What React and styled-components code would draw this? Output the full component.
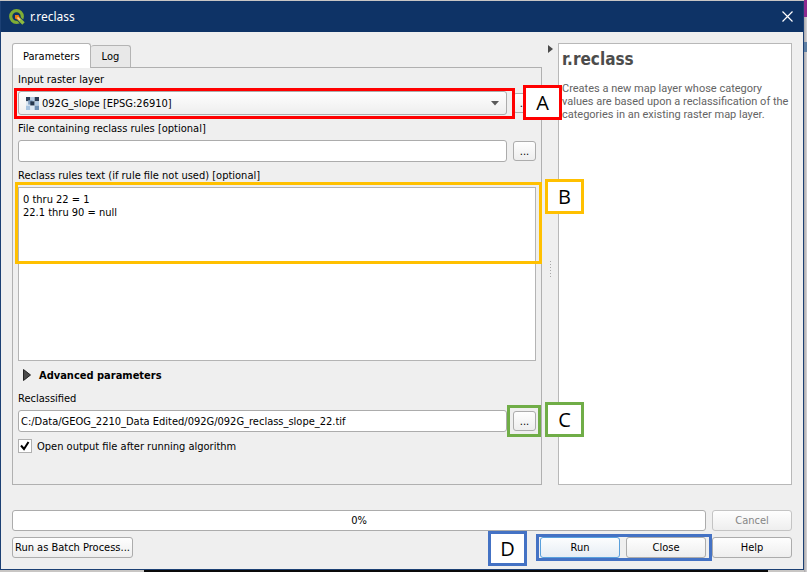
import React, { useState } from 'react';
import styled, { createGlobalStyle, css } from 'styled-components';

const GlobalStyle = createGlobalStyle`
  * {
    box-sizing: border-box;
  }

  body {
    margin: 0;
    background: #d8d8d8;
    color: #000;
    font: 11px/13px 'DejaVu Sans Condensed', sans-serif;
  }

  button, input, select, textarea {
    font: inherit;
    color: inherit;
    margin: 0;
  }
`;

const Desktop = styled.div`
  display: flex;
  min-height: 100vh;
  padding: 1px 3px 2px 0;
  background:
    linear-gradient(#8e2a8e, #8e2a8e) right 0 / 3px 17px no-repeat,
    linear-gradient(#5d7fa3, #5d7fa3) right 42px / 3px 10px no-repeat,
    linear-gradient(90deg, transparent 144px, #0a0a0a 144px, #0a0a0a calc(100% - 39px), transparent 0) bottom / 100% 2px no-repeat,
    linear-gradient(90deg, #a8a6a8, #d8d6d8) right / 3px 100% no-repeat,
    #c8c6c4;
`;

const Dialog = styled.main`
  flex: 1;
  display: flex;
  flex-direction: column;
  min-width: 0;
  border: 1px solid #1c4074;
  border-top: 0;
  background: #efefef;
`;

const TitleBar = styled.header`
  display: flex;
  align-items: center;
  gap: 5px;
  height: 31px;
  padding: 0 8px;
  background: #0e3366;
  color: #fff;
`;

const Title = styled.h1`
  flex: 1;
  margin: 0;
  font: 12px/16px 'Noto Sans', sans-serif;
`;

const CloseIcon = styled.button`
  display: flex;
  padding: 2px;
  border: 0;
  background: none;
`;

const Body = styled.div`
  flex: 1;
  display: grid;
  grid-template-columns: minmax(0, 530fr) 16px minmax(0, 234fr);
  padding: 11px 11px 0;
`;

const Left = styled.section`
  display: flex;
  flex-direction: column;
`;

const Tabs = styled.div`
  display: flex;
  align-items: flex-end;
  height: 24px;
`;

const Tab = styled.button`
  position: relative;
  z-index: 1;
  height: ${({ $active }) => ($active ? 25 : 22)}px;
  margin-bottom: ${({ $active }) => ($active ? -1 : 0)}px;
  padding: 0 ${({ $active }) => ($active ? 10 : 11)}px;
  border: 1px solid #b4b4b4;
  border-bottom: 0;
  border-left-width: ${({ $active }) => ($active ? 1 : 0)}px;
  border-radius: 3px 3px 0 0;
  background: ${({ $active }) => ($active ? '#fff' : '#e8e8e8')};
`;

const Panel = styled.form`
  flex: 1;
  display: flex;
  flex-direction: column;
  padding: 5px;
  border: 1px solid #b0b0b0;
`;

const Label = styled.label`
  display: block;
  line-height: 14px;
  margin-bottom: 4px;
`;

const FieldRow = styled.div`
  position: relative;
  display: flex;
  align-items: center;
  gap: 6px;
  margin-bottom: 7px;
`;

const frame = css`
  border: 1px solid #acacac;
  border-radius: 3px;
`;

const LayerPicker = styled.div`
  position: relative;
  flex: 1;
  display: flex;
  align-items: center;
`;

const PickerIcon = styled.span`
  position: absolute;
  ${({ $side }) => $side}: 8px;
  display: flex;
  pointer-events: none;
`;

const LayerSelect = styled.select`
  ${frame}
  appearance: none;
  width: 100%;
  height: 24px;
  padding: 0 23px;
  background: linear-gradient(#fefefe, #eee);
`;

const TextInput = styled.input`
  ${frame}
  flex: 1;
  min-width: 0;
  height: 22px;
  padding: 0 2px;
  background: #fff;
`;

const RulesText = styled.textarea`
  display: block;
  width: 100%;
  height: 174px;
  padding: 5px 4px;
  border: 1px solid #b4b4b4;
  background: #fff;
  resize: none;
`;

const Button = styled.button`
  ${frame}
  height: 21px;
  padding: 0 2px;
  background: linear-gradient(#fefefe, #eee);

  &:disabled {
    color: #858585;
    border-color: #c4c4c4;
  }
`;

const BrowseButton = styled(Button)`
  width: 23px;
  height: 20px;
`;

const DialogButton = styled(Button)`
  width: 80px;
  ${({ $primary }) =>
    $primary &&
    css`
      border-color: #5aa0dc;
      background: linear-gradient(#fcfdfe, #e6edf4);
    `}
`;

const Advanced = styled.button`
  display: flex;
  align-items: center;
  gap: 8px;
  height: 14px;
  margin-bottom: 10px;
  padding: 0 5px;
  border: 0;
  background: none;
  font-weight: bold;
`;

const CheckRow = styled.label`
  display: flex;
  align-items: center;
  gap: 5px;
  height: 14px;
`;

const Checkbox = styled.input`
  appearance: none;
  width: 14px;
  height: 14px;
  border: 1px solid #b0b0b0;
  background: #fff;
`;

const CheckMark = styled.span`
  position: relative;
  display: flex;

  svg {
    position: absolute;
    top: 2px;
    left: 2px;
    pointer-events: none;
  }
`;

const Splitter = styled.div`
  display: flex;
  flex-direction: column;
  align-items: center;
  justify-content: space-between;
  padding-top: 2px;
`;

const Grip = styled.div`
  width: 1px;
  height: 16px;
  background: repeating-linear-gradient(#a8a8a8 0 1px, transparent 1px 3px);
`;

const Help = styled.aside`
  padding: 5px 0 5px 3px;
  border: 1px solid #b8b8b8;
  background: #fff;
  color: #646464;
`;

const HelpTitle = styled.h2`
  margin: 0 0 13px;
  color: #4c4c4c;
  font: bold 17px/20px 'DejaVu Sans Condensed', sans-serif;
`;

const HelpText = styled.p`
  margin: 0;
  font-family: Roboto, sans-serif;
`;

const Footer = styled.footer`
  display: grid;
  gap: 6px;
  padding: 25px 11px 11px;
`;

const FooterRow = styled.div`
  display: flex;
  gap: 6px;
`;

const Progress = styled.div`
  ${frame}
  flex: 1;
  height: 21px;
  background: #fff;
  line-height: 19px;
  text-align: center;
`;

const ButtonPair = styled.div`
  position: relative;
  display: flex;
  gap: 6px;
  margin-left: auto;
`;

const Highlight = styled.div`
  position: absolute;
  inset: ${({ $inset }) => $inset};
  z-index: 2;
  border: 3px solid ${({ $color }) => $color};
  pointer-events: none;
`;

const Tag = styled.span`
  position: absolute;
  ${({ $side }) => ($side === 'left' ? 'right' : 'left')}: calc(100% + ${({ $gap }) => $gap}px);
  top: -6px;
  z-index: 2;
  width: 39px;
  height: 35px;
  border: 3px solid ${({ $color }) => $color};
  background: #fff;
  font: 20px/29px 'Open Sans', sans-serif;
  text-align: center;
`;

const Anchor = styled.div`
  position: relative;
  display: flex;
`;

const red = '#ff0000';
const yellow = '#ffc000';
const green = '#70ad47';
const blue = '#4472c4';

const Mark = ({ color, inset, letter, side = 'right', gap = 6 }) => (
  <Highlight $color={color} $inset={inset}>
    <Tag $color={color} $side={side} $gap={gap}>{letter}</Tag>
  </Highlight>
);

const QgisLogo = () => (
  <svg width="16" height="16" viewBox="0 0 16 16">
    <circle cx="7.5" cy="7.5" r="5.8" fill="none" stroke="#7fae35" strokeWidth="3.2" />
    <path d="M8 8 L16 16" stroke="#0e3366" strokeWidth="5" />
    <path d="M9.5 9.5 L14.5 14.5" stroke="#8dba3f" strokeWidth="3.4" />
    <path d="M6 6 H9.5 L11.5 10 L10 11.5 L6 9.5Z" fill="#ee7913" />
    <path d="M8.5 8.5 L11 11" stroke="#f4d9a0" strokeWidth="1.6" />
  </svg>
);

const cells = [
  [0, 0, '#2b3d55'], [4, 0, '#b4cce4'], [8, 0, '#2b3d55'],
  [0, 4, '#dce8f4'], [2, 3, '#7f9cbc'], [4, 4, '#24364c'], [8, 4, '#b4cce4'],
  [0, 8, '#a8c4e0'], [4, 8, '#dce8f4'], [8, 8, '#6f90b4'],
];

const RasterIcon = () => (
  <svg width="13" height="13" viewBox="0 0 12 12">
    {cells.map(([x, y, fill], i) => (
      <rect key={i} x={x} y={y} width="4" height="4" fill={fill} />
    ))}
  </svg>
);

function App() {
  const [rules, setRules] = useState('0 thru 22 = 1\n22.1 thru 90 = null');
  const [file, setFile] = useState('');
  const [output, setOutput] = useState('C:/Data/GEOG_2210_Data Edited/092G/092G_reclass_slope_22.tif');
  const [open, setOpen] = useState(true);

  return (
    <>
      <GlobalStyle />
      <Desktop>
        <Dialog>
          <TitleBar>
            <QgisLogo />
            <Title>r.reclass</Title>
            <CloseIcon aria-label="Close window">
              <svg width="11" height="11" viewBox="0 0 11 11">
                <path d="M0.5 0.5 L10.5 10.5 M10.5 0.5 L0.5 10.5" stroke="#fff" strokeWidth="1.2" />
              </svg>
            </CloseIcon>
          </TitleBar>

          <Body>
            <Left>
              <Tabs role="tablist">
                <Tab role="tab" aria-selected="true" $active>Parameters</Tab>
                <Tab role="tab" aria-selected="false">Log</Tab>
              </Tabs>
              <Panel onSubmit={(e) => e.preventDefault()}>
                <Label htmlFor="layer">Input raster layer</Label>
                <FieldRow>
                  <LayerPicker>
                    <LayerSelect id="layer">
                      <option>092G_slope [EPSG:26910]</option>
                    </LayerSelect>
                    <PickerIcon $side="left">
                      <RasterIcon />
                    </PickerIcon>
                    <PickerIcon $side="right">
                      <svg width="8" height="5" viewBox="0 0 8 5">
                        <path d="M0 0 H8 L4 4.5Z" fill="#5a5a5a" />
                      </svg>
                    </PickerIcon>
                    <Mark color={red} inset="-3px -8px -4px -4px" letter="A" gap={11} />
                  </LayerPicker>
                  <BrowseButton type="button" aria-label="Browse layer">...</BrowseButton>
                </FieldRow>

                <Label htmlFor="file">File containing reclass rules [optional]</Label>
                <FieldRow>
                  <TextInput id="file" value={file} onChange={(e) => setFile(e.target.value)} />
                  <BrowseButton type="button" aria-label="Browse rules file">...</BrowseButton>
                </FieldRow>

                <Label htmlFor="rules">Reclass rules text (if rule file not used) [optional]</Label>
                <FieldRow>
                  <RulesText id="rules" value={rules} onChange={(e) => setRules(e.target.value)} />
                  <Mark color={yellow} inset="-5px -6px 97px -3px" letter="B" />
                </FieldRow>

                <Advanced type="button">
                  <svg width="8" height="12" viewBox="0 0 8 12">
                    <path d="M0.5 0.5 L7.5 6 L0.5 11.5Z" fill="#4a4a4a" stroke="#222" />
                  </svg>
                  Advanced parameters
                </Advanced>

                <Label htmlFor="output">Reclassified</Label>
                <FieldRow>
                  <TextInput id="output" value={output} onChange={(e) => setOutput(e.target.value)} />
                  <Anchor>
                    <BrowseButton type="button" aria-label="Browse output">...</BrowseButton>
                    <Mark color={green} inset="-6px -5px -6px -6px" letter="C" gap={7} />
                  </Anchor>
                </FieldRow>

                <CheckRow>
                  <CheckMark>
                    <Checkbox type="checkbox" checked={open} onChange={(e) => setOpen(e.target.checked)} />
                    {open && (
                      <svg width="10" height="10" viewBox="0 0 10 10">
                        <path d="M1 4.5 L4 8 L8.5 1" fill="none" stroke="#000" strokeWidth="2" />
                      </svg>
                    )}
                  </CheckMark>
                  Open output file after running algorithm
                </CheckRow>
              </Panel>
            </Left>

            <Splitter>
              <svg width="5" height="8" viewBox="0 0 5 8">
                <path d="M0 0 L5 4 L0 8Z" fill="#4a4a4a" />
              </svg>
              <Grip />
              <span />
            </Splitter>

            <Help>
              <HelpTitle>r.reclass</HelpTitle>
              <HelpText>
                Creates a new map layer whose category values are based upon a
                reclassification of the categories in an existing raster map layer.
              </HelpText>
            </Help>
          </Body>

          <Footer>
            <FooterRow>
              <Progress role="progressbar" aria-valuenow={0}>0%</Progress>
              <DialogButton disabled>Cancel</DialogButton>
            </FooterRow>
            <FooterRow>
              <Button>Run as Batch Process...</Button>
              <ButtonPair>
                <DialogButton $primary>Run</DialogButton>
                <DialogButton>Close</DialogButton>
                <Mark color={blue} inset="-3px -6px -3px -4px" letter="D" side="left" gap={12} />
              </ButtonPair>
              <DialogButton>Help</DialogButton>
            </FooterRow>
          </Footer>
        </Dialog>
      </Desktop>
    </>
  );
}

export default App;
